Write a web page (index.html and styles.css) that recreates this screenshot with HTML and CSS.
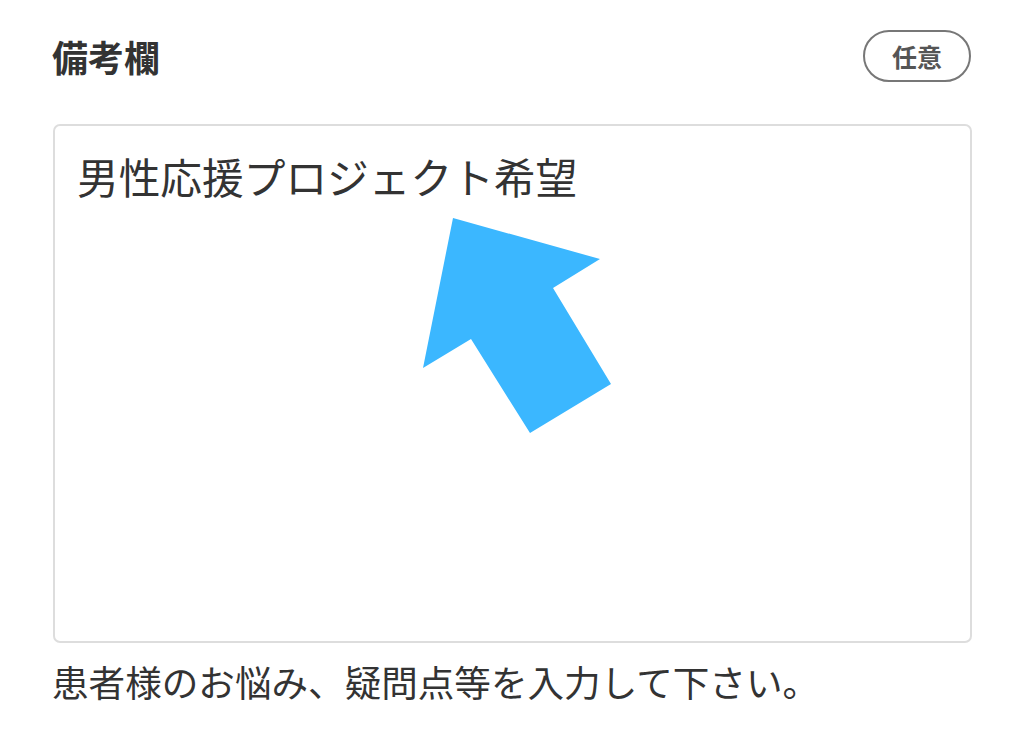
FILE: index.html
```html
<!DOCTYPE html>
<html lang="ja">
<head>
<meta charset="utf-8">
<link rel="stylesheet" href="styles.css">
</head>
<body>
<div class="field">
  <div class="field-head">
    <h2 class="field-title">備考欄</h2>
    <span class="badge">任意</span>
  </div>
  <div class="input-box">
    <div class="input-text">男性応援プロジェクト希望</div>
    <svg class="arrow" width="220" height="240" viewBox="0 0 220 240">
      <polygon points="53,18 200,59 153,88 211,184 130,233 71,139 23,168" fill="#3bb7ff"/>
    </svg>
  </div>
  <p class="hint">患者様のお悩み、疑問点等を入力して下さい。</p>
</div>
</body>
</html>
```

FILE: styles.css
```css
html, body {
  margin: 0;
  padding: 0;
  background: #ffffff;
}
body {
  font-family: "Noto Sans CJK JP", "Noto Sans", sans-serif;
  color: #333333;
}
.field {
  width: 920px;
  margin-left: 52px;
  padding-top: 30px;
}
.field-head {
  display: flex;
  justify-content: space-between;
  align-items: center;
  height: 52px;
}
.field-title {
  margin: 0;
  font-size: 36px;
  font-weight: 700;
  color: #333333;
  line-height: 1;
}
.badge {
  box-sizing: border-box;
  height: 52px;
  width: 108px;
  border: 2px solid #777777;
  border-radius: 26px;
  display: flex;
  align-items: center;
  justify-content: center;
  font-size: 25px;
  font-weight: 700;
  color: #555555;
  margin-right: 1px;
}
.input-box {
  position: relative;
  box-sizing: border-box;
  margin-top: 42px;
  margin-left: 1px;
  width: 919px;
  height: 519px;
  border: 2px solid #dddddd;
  border-radius: 7px;
  padding: 21px 22px;
}
.input-text {
  font-size: 41.7px;
  line-height: 1.4;
  color: #333333;
}
.arrow {
  position: absolute;
  left: 345px;
  top: 74px;
}
.hint {
  margin: 13px 0 0 0;
  font-size: 36.6px;
  line-height: 1.4;
  color: #333333;
}
```
